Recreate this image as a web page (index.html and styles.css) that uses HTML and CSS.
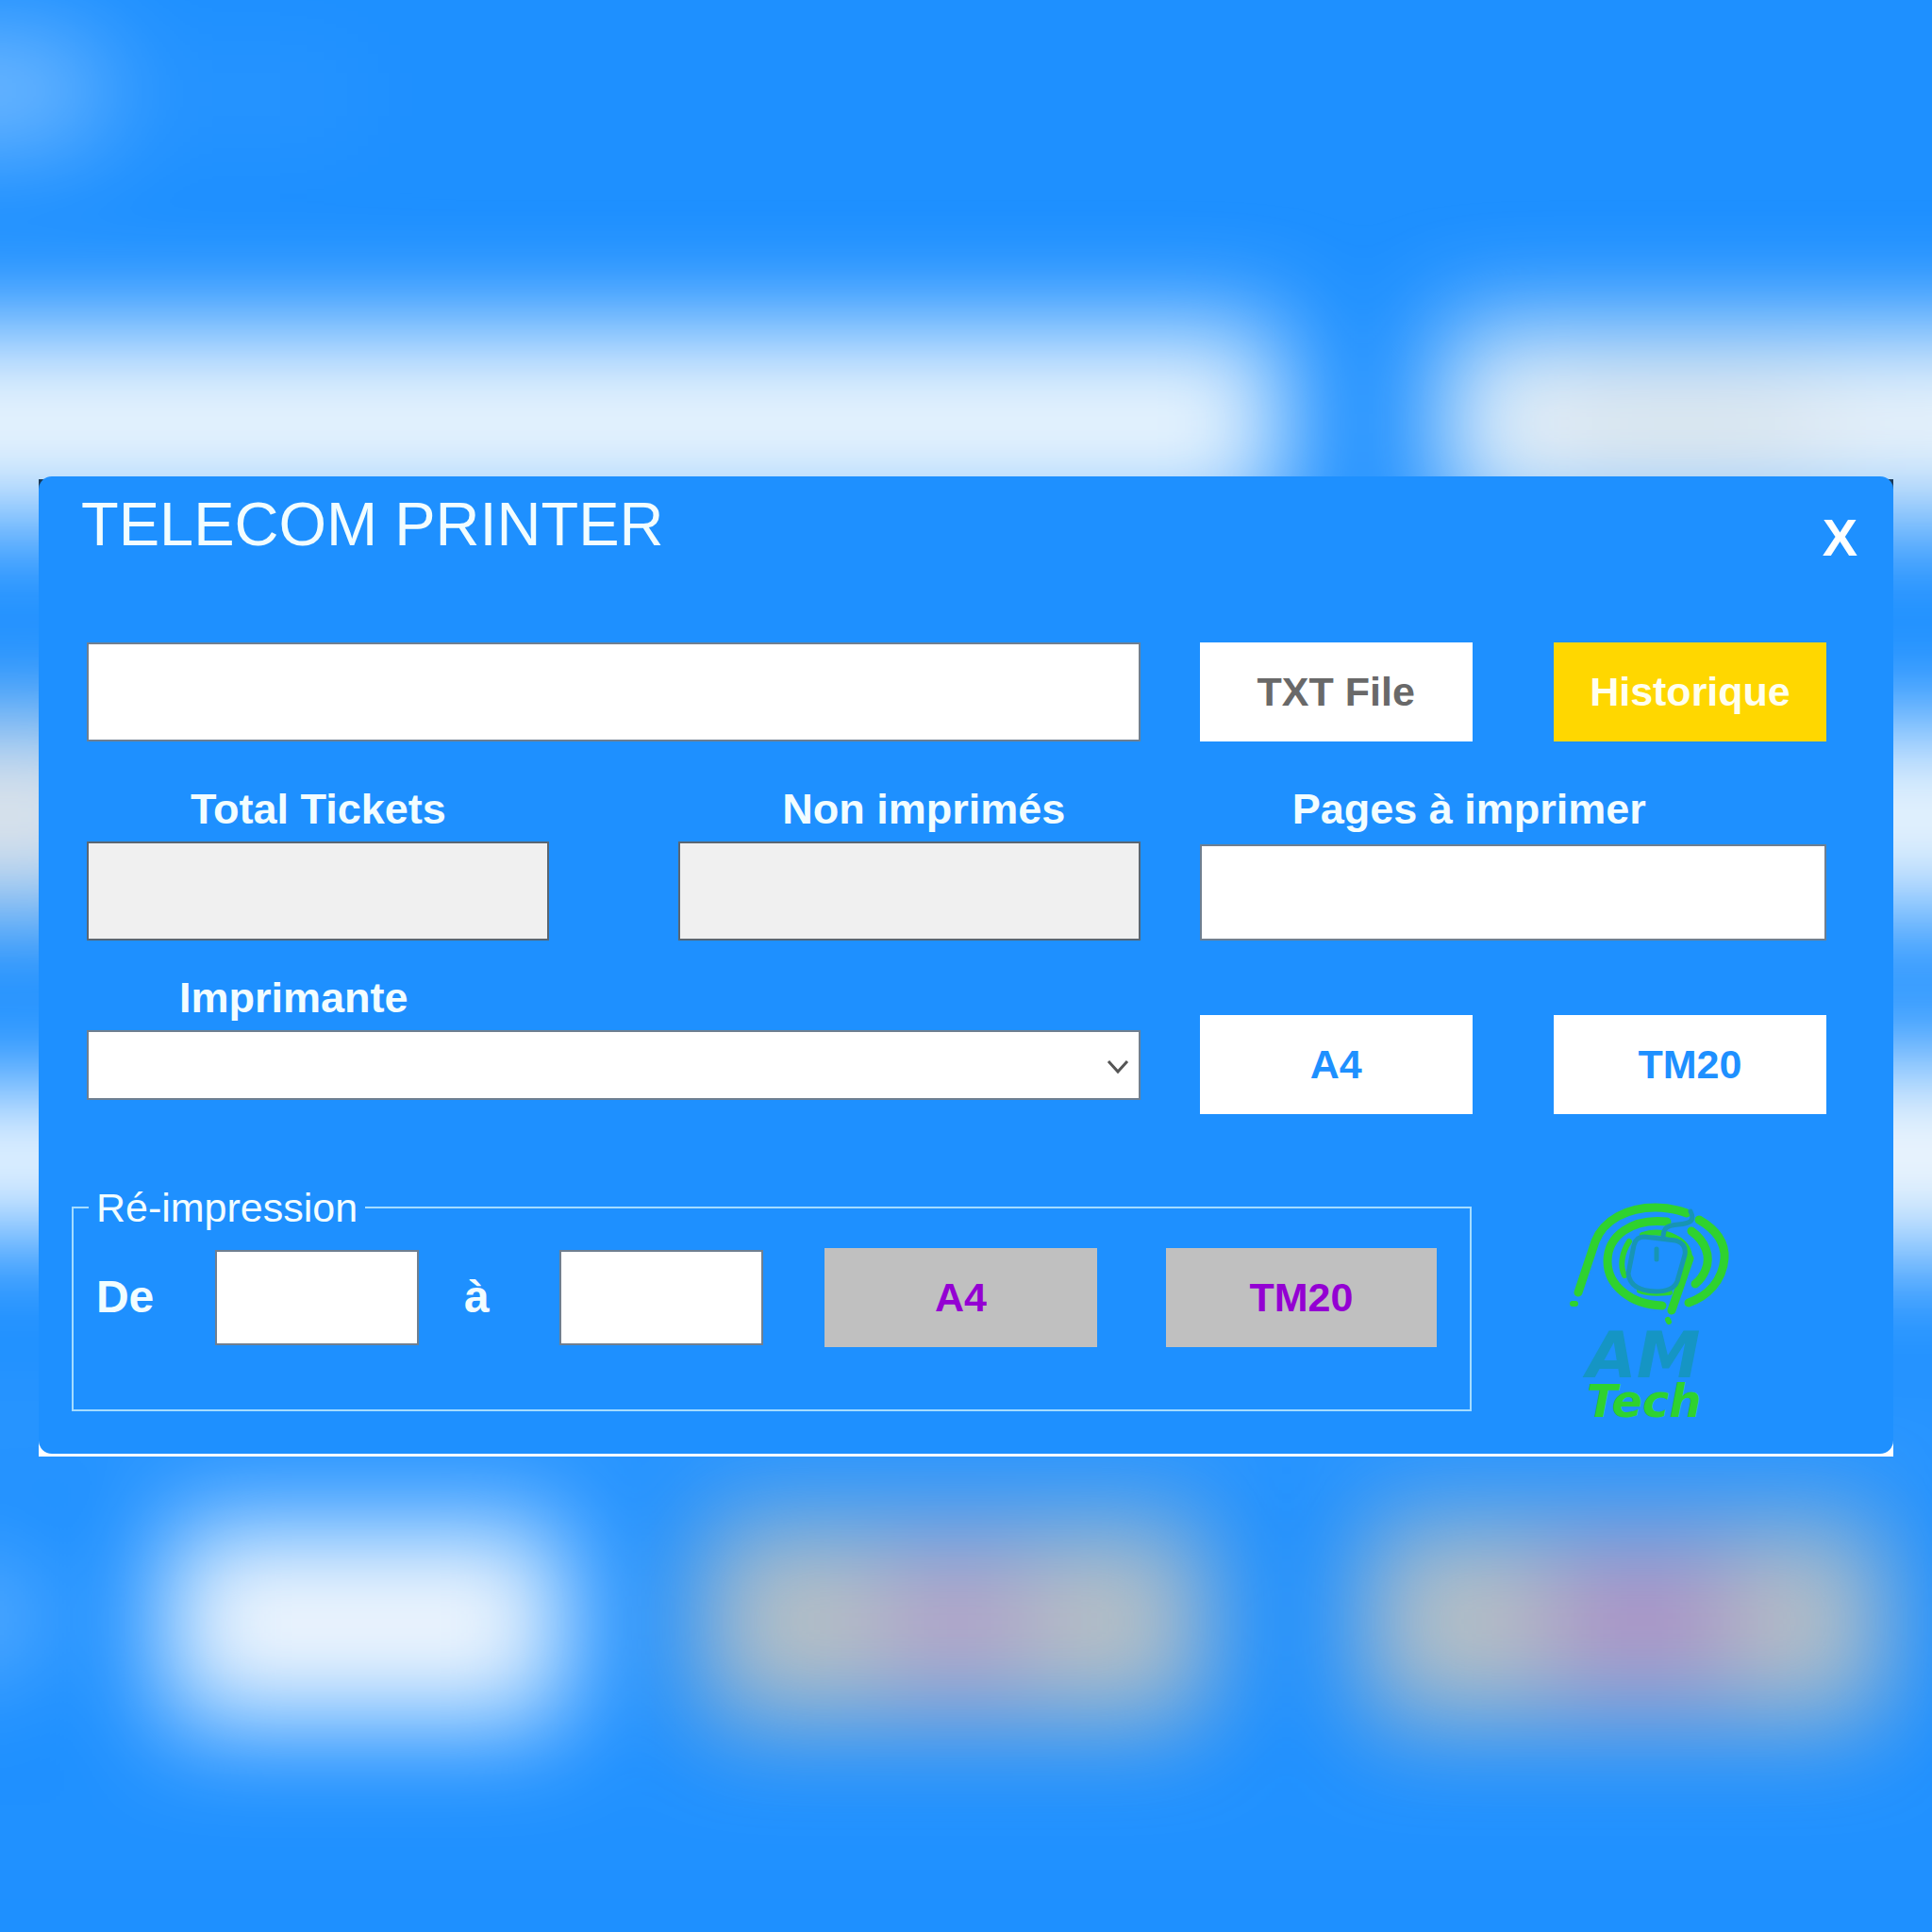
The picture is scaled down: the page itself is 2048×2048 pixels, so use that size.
FILE: index.html
```html
<!DOCTYPE html>
<html lang="fr">
<head>
<meta charset="utf-8">
<meta name="viewport" content="width=device-width, initial-scale=1">
<title>Telecom Printer</title>
<link rel="stylesheet" href="styles.css">
</head>
<body>
<svg class="backdrop" viewBox="0 0 2048 2048" preserveAspectRatio="xMidYMid slice" aria-hidden="true">
  <defs>
    <filter id="soft" filterUnits="userSpaceOnUse" x="-400" y="-200" width="2900" height="2500">
      <feGaussianBlur stdDeviation="56"/>
    </filter>
  </defs>
  <g filter="url(#soft)">
    <rect x="-300" y="40" width="400" height="112" fill="#fff" opacity=".42"/>
    <rect x="90" y="60" width="300" height="80" fill="#fff" opacity=".05"/>
    <rect x="-300" y="346" width="1660" height="206" fill="#eaf4fd"/>
    <rect x="1530" y="346" width="900" height="206" fill="#eaf3fa"/>
    <rect x="1640" y="410" width="290" height="80" fill="#b0b0b0" opacity=".25"/>
    <rect x="-300" y="762" width="453" height="203" fill="#dfe4ea"/>
    <rect x="1530" y="768" width="900" height="199" fill="#eaf4fd"/>
    <rect x="-300" y="1158" width="1660" height="144" fill="#fff"/>
    <rect x="1530" y="1122" width="900" height="207" fill="#f0f7fd"/>
    <rect x="-60" y="1660" width="90" height="110" fill="#fff" opacity=".4"/>
    <rect x="176" y="1616" width="424" height="210" fill="#f0f6fd"/>
    <rect x="746" y="1614" width="534" height="210" fill="#b8c0c4"/>
    <rect x="940" y="1650" width="150" height="130" fill="#a868d0" opacity=".42"/>
    <rect x="1448" y="1614" width="550" height="210" fill="#b8c0c4"/>
    <rect x="1640" y="1650" width="200" height="130" fill="#a058c8" opacity=".52"/>
    <rect x="-300" y="1500" width="2600" height="16" fill="#fff" opacity=".35"/>
    <rect x="-300" y="1944" width="2600" height="8" fill="#fff" opacity=".2"/>
  </g>
</svg>

<main class="window">
  <div class="panel">
    <header class="header">
      <h1 class="title">TELECOM PRINTER</h1>
      <button class="close" type="button" aria-label="Fermer">X</button>
    </header>

    <form class="form">
      <div class="row">
        <input class="box span-main" type="text" aria-label="Fichier">
        <button class="btn col-left" type="button">TXT File</button>
        <button class="btn btn-gold col-right" type="button">Historique</button>
      </div>

      <div class="row row-counts">
        <div class="field col-total">
          <label class="label" for="total">Total Tickets</label>
          <input class="box box-grey" id="total" type="text" readonly>
        </div>
        <div class="field col-rest">
          <label class="label" for="rest">Non imprimés</label>
          <input class="box box-grey" id="rest" type="text" readonly>
        </div>
        <div class="field span-side">
          <label class="label label-near" for="pages">Pages à imprimer</label>
          <input class="box box-low" id="pages" type="text">
        </div>
      </div>

      <div class="row row-printer">
        <div class="field span-main">
          <label class="label label-near" for="printer">Imprimante</label>
          <div class="select">
            <select class="select-input" id="printer"><option></option></select>
            <svg class="chevron" viewBox="0 0 24 16" aria-hidden="true"><path d="M2 2l10 11L22 2"/></svg>
          </div>
        </div>
        <button class="btn btn-blue col-left" type="button">A4</button>
        <button class="btn btn-blue col-right" type="button">TM20</button>
      </div>

      <div class="row-bottom">
        <fieldset class="group">
          <legend class="legend">Ré-impression</legend>
          <div class="range">
            <label class="range-label" for="from">De</label>
            <input class="box box-range" id="from" type="text">
            <label class="range-label range-to" for="to">à</label>
            <input class="box box-range" id="to" type="text">
            <button class="btn btn-grey range-a4" type="button">A4</button>
            <button class="btn btn-grey range-tm" type="button">TM20</button>
          </div>
        </fieldset>
        <svg class="logo" viewBox="0 5 260 275" role="img" aria-label="AM Tech">
          <g class="logo-green">
            <path d="M53 120L71 66C80 43 105 30 135 30C148 30 160 33 168 36"/>
            <path d="M181 43C200 54 209 68 208 84C206 108 190 124 170 131"/>
            <path d="M147 45C110 41 84 60 84 87C84 112 108 133 142 134"/>
            <path d="M173 55C188 66 194 82 188 96C185 104 182 107 177 111"/>
            <path class="thin" d="M107 66C99 78 97 92 102 102"/>
            <path class="thin" d="M121 59C132 55 142 56 152 60C164 65 171 72 171 84"/>
            <path class="thin" d="M118 118C128 122 140 121 150 120"/>
            <path d="M171 84L152 139"/>
            <path class="thin" d="M148 149l1 2M47 132h3"/>
          </g>
          <g class="logo-teal">
            <path d="M112 70Q114 61 123 61L156 65Q168 68 166 80L158 108Q154 119 135 119Q108 118 106 100Z"/>
            <path d="M136 74v11"/>
            <path d="M143 62C143 50 149 49 159 48C172 47 177 44 172 34"/>
          </g>
          <text class="logo-am" x="62" y="210">AM</text>
          <text class="logo-tech" x="62" y="252">Tech</text>
        </svg>
      </div>
    </form>
  </div>
</main>
</body>
</html>
```
FILE: styles.css
```css
* { box-sizing: border-box; }

body {
  margin: 0;
  min-height: 100vh;
  display: flex;
  align-items: center;
  justify-content: center;
  background: #1e90ff;
  color: #f2fdff;
  font-family: "Liberation Sans", Arial, sans-serif;
  font-size: 45px;
  overflow-x: hidden;
}

.backdrop {
  position: fixed;
  inset: 0;
  width: 100%;
  height: 100%;
  z-index: -1;
}

/* The strip shows dark behind the top corners and white along the bottom */
.window {
  width: 96%;
  padding-bottom: 3px;
  background: linear-gradient(transparent 3px, #1c3a58 3px, #1c3a58 20px, #fff 20px);
}

.panel {
  background: #1e90ff;
  border-radius: 14px;
  padding-bottom: 11px;
}

.header {
  display: flex;
  justify-content: space-between;
  align-items: flex-start;
  height: 176px;
  padding: 14px 38px 0 45px;
}

.title {
  margin: 0;
  font-size: 65px;
  line-height: 74px;
  font-weight: 400;
}

.close {
  margin: 19px 0 0;
  padding: 0;
  border: 0;
  background: none;
  color: #fff;
  font: bold 56px/64px "Liberation Sans", Arial, sans-serif;
}

.form { padding: 0 71px 0 51px; }

.row {
  display: grid;
  grid-template-columns: 490fr 137fr 489fr 63fr 289fr 86fr 289fr;
  align-items: end;
}

.row-counts { margin-top: 47px; }
.row-printer { margin-top: 36px; }
.row-printer .field { align-self: start; }

.span-main { grid-column: 1 / 4; }
.span-side { grid-column: 5 / 8; }
.col-total { grid-column: 1; }
.col-rest { grid-column: 3; }
.col-left { grid-column: 5; }
.col-right { grid-column: 7; }

.field {
  display: flex;
  flex-direction: column;
}

.label {
  padding-left: 110px;
  margin-bottom: 9px;
  line-height: 50px;
  font-weight: 700;
  white-space: nowrap;
}

.label-near { padding-left: 98px; }

.box {
  width: 100%;
  min-width: 0;
  height: 105px;
  padding: 0 16px;
  border: 2px solid #6f7f90;
  border-radius: 0;
  background: #fff;
  color: #333;
  font: inherit;
}

.box-grey {
  background: #f0f0f0;
  border-color: #5a6672;
}

.box-low {
  height: 102px;
  margin-top: 3px;
}

.box-range { height: 101px; }

.btn {
  width: 100%;
  height: 105px;
  padding: 0;
  border: 0;
  background: #fff;
  color: #696969;
  font: bold 43px/48px "Liberation Sans", Arial, sans-serif;
}

.btn-gold { background: #ffd700; color: #fffff0; }
.btn-blue { color: #1e90ff; }
.btn-grey { background: #c0c0c0; color: #9400d3; }

.row-printer .btn { margin-top: 43px; }

.select { position: relative; }

.select-input {
  display: block;
  width: 100%;
  height: 74px;
  padding: 0 48px 0 16px;
  border: 2px solid #6f7f90;
  border-radius: 0;
  appearance: none;
  background: #fff;
  color: #333;
  font: inherit;
}

.chevron {
  position: absolute;
  right: 12px;
  top: 31px;
  width: 24px;
  height: 16px;
  fill: none;
  stroke: #555;
  stroke-width: 3;
  pointer-events: none;
}

.row-bottom {
  display: grid;
  grid-template-columns: 1484fr 376fr;
  align-items: start;
  margin: 74px 0 0 -16px;
}

.group {
  min-width: 0;
  margin: 0;
  padding: 18px 0 66px;
  border: 2px solid #a4dcff;
}

.legend {
  margin-left: 16px;
  padding: 0 8px;
  font-size: 43px;
  line-height: 50px;
}

.range {
  display: grid;
  grid-template-columns: 126fr 216fr 149fr 216fr 65fr 289fr 73fr 287fr;
  align-items: center;
  padding: 0 35px 0 24px;
}

.range-label {
  font-size: 48px;
  line-height: 56px;
  font-weight: 700;
}

.range-to { padding-left: 48px; }
.range-a4 { grid-column: 6; }
.range-tm { grid-column: 8; }

.logo {
  width: 260px;
  height: 275px;
  margin-left: 60px;
}

.logo-green,
.logo-teal {
  fill: none;
  stroke-linecap: round;
  stroke-linejoin: round;
}

.logo-green { stroke: #2fd22f; stroke-width: 9; }
.logo-green .thin { stroke-width: 6; }
.logo-teal { stroke: #1795b4; stroke-width: 5; }

.logo-am,
.logo-tech {
  font-family: "DejaVu Sans", sans-serif;
  font-weight: 700;
  font-style: italic;
}

.logo-am { font-size: 68px; fill: #1595c4; }
.logo-tech { font-size: 48px; fill: #2fd22f; }
```
